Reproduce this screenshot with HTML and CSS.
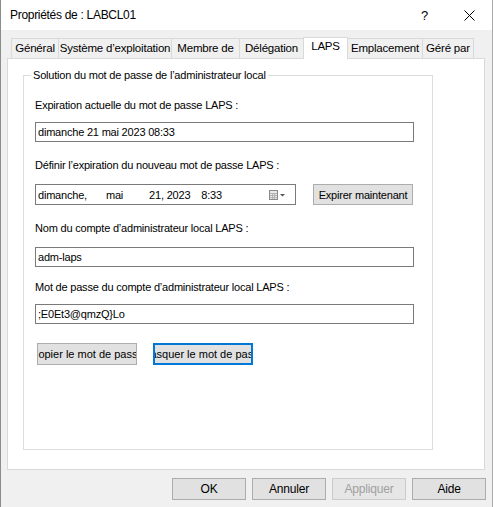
FILE: index.html
```html
<!DOCTYPE html>
<html lang="fr">
<head>
    <meta charset="UTF-8">
    <title>Propriétés de : LABCL01</title>
    <link rel="stylesheet" href="styles.css">
</head>
<body>
    <div class="window">
        <div class="titlebar">
            <span class="title">Propriétés de : LABCL01</span>
            <span class="help">?</span>
            <svg class="close" width="11" height="11" viewBox="0 0 11 11">
                <path d="M0.5 0.5 L10.5 10.5 M10.5 0.5 L0.5 10.5" stroke="#000" stroke-width="1" fill="none"/>
            </svg>
        </div>

        <!-- Onglets -->
        <div class="tabs">
            <div class="tab tab-general">Général</div>
            <div class="tab tab-system">Système d’exploitation</div>
            <div class="tab tab-member">Membre de</div>
            <div class="tab tab-delegation">Délégation</div>
            <div class="tab tab-laps active">LAPS</div>
            <div class="tab tab-location">Emplacement</div>
            <div class="tab tab-managed">Géré par</div>
        </div>

        <div class="panel">
            <fieldset class="group">
                <legend>Solution du mot de passe de l’administrateur local</legend>

                <div class="label label-first">Expiration actuelle du mot de passe LAPS :</div>
                <div class="textbox">dimanche 21 mai 2023 08:33</div>

                <div class="label label-date">Définir l’expiration du nouveau mot de passe LAPS :</div>
                <div class="date-row">
                    <div class="datepicker">
                        <span class="dp-day">dimanche,</span>
                        <span class="dp-month">mai</span>
                        <span class="dp-year">21, 2023</span>
                        <span class="dp-time">8:33</span>
                        <svg class="dp-icon" width="16" height="10" viewBox="0 0 16 10">
                            <rect x="0.5" y="0.5" width="8" height="9" fill="#e8e8e8" stroke="#8a8a8a"/>
                            <path d="M1 3.5 H8 M1 5.5 H8 M1 7.5 H8 M3.5 3 V9 M5.5 3 V9" stroke="#b4b4b4" stroke-width="1"/>
                            <path d="M11 4 H16 L13.5 6.5 Z" fill="#555"/>
                        </svg>
                    </div>
                    <button class="btn btn-expire">Expirer maintenant</button>
                </div>

                <div class="label label-account">Nom du compte d’administrateur local LAPS :</div>
                <div class="textbox">adm-laps</div>

                <div class="label">Mot de passe du compte d’administrateur local LAPS :</div>
                <div class="textbox">;E0Et3@qmzQ}Lo</div>

                <div class="pwd-actions">
                    <button class="btn btn-clip"><span>Copier le mot de passe</span></button>
                    <button class="btn btn-clip btn-focus"><span>Masquer le mot de passe</span></button>
                </div>
            </fieldset>
        </div>

        <div class="footer">
            <button class="btn btn-dialog">OK</button>
            <button class="btn btn-dialog">Annuler</button>
            <button class="btn btn-dialog" disabled>Appliquer</button>
            <button class="btn btn-dialog">Aide</button>
        </div>
    </div>
</body>
</html>
```

FILE: styles.css
```css
* {
    margin: 0;
    padding: 0;
    box-sizing: border-box;
}
body {
    font-family: 'Liberation Sans', Arial, sans-serif;
    font-size: 11px;
    letter-spacing: -0.2px;
    color: #000;
    background: #fff;
}
.window {
    width: 493px;
    height: 507px;
    background: #f0f0f0;
    border-left: 1px solid #8c8c8c;
    border-right: 1px solid #aaaaaa;
}

/* Barre de titre */
.titlebar {
    height: 30px;
    background: #fff;
    display: flex;
    align-items: center;
    padding-left: 9px;
    font-size: 12px;
    letter-spacing: -0.3px;
}
.title {
    flex: 1;
}
.help {
    font-size: 13px;
    margin-right: 36px;
}
.close {
    margin-right: 17px;
}

/* Onglets */
.tabs {
    display: flex;
    align-items: flex-end;
    height: 28px;
    padding-left: 10px;
    position: relative;
    z-index: 1;
}
.tab {
    height: 20px;
    line-height: 18px;
    text-align: center;
    border: 1px solid #d9d9d9;
    border-bottom: none;
    margin-right: -1px;
    font-size: 11.5px;
    letter-spacing: -0.2px;
    background: #f0f0f0;
    white-space: nowrap;
}
.tab.active {
    height: 22px;
    line-height: 16px;
    margin-bottom: -1px;
    background: #fff;
}
.tab-general { width: 48px; }
.tab-system { width: 114px; }
.tab-member { width: 69px; }
.tab-delegation { width: 65px; }
.tab-laps { width: 45px; }
.tab-location { width: 76px; }
.tab-managed { width: 52px; }

.panel {
    margin-left: 6px;
    width: 478px;
    height: 412px;
    background: #fff;
    border: 1px solid #d9d9d9;
}

/* Groupe */
.group {
    margin: 9px 0 0 15px;
    width: 410px;
    height: 382px;
    border: 1px solid #dcdcdc;
    padding: 0 18px 0 11px;
}
.group legend {
    margin-left: -4px;
    padding: 0 2px;
    line-height: 14px;
    font-size: 11px;
}
.label {
    line-height: 14px;
    margin-top: 13px;
    margin-bottom: 10px;
}
.label-first {
    margin-top: 16px;
    margin-bottom: 10px;
}
.label-date {
    margin-top: 16px;
    margin-bottom: 12px;
}
.label-account {
    margin-top: 16px;
    margin-bottom: 12px;
}
.textbox {
    height: 20px;
    line-height: 18px;
    border: 1px solid #7a7a7a;
    padding-left: 2px;
    background: #fff;
}

/* Sélecteur de date */
.date-row {
    display: flex;
    align-items: center;
}
.datepicker {
    width: 261px;
    height: 21px;
    border: 1px solid #7a7a7a;
    display: flex;
    align-items: center;
    padding-left: 2px;
}
.dp-month {
    margin-left: 19px;
}
.dp-year {
    margin-left: 26px;
}
.dp-time {
    margin-left: 11px;
}
.dp-icon {
    margin-left: auto;
    margin-right: 10px;
}

.btn {
    font-family: inherit;
    font-size: 11px;
    letter-spacing: -0.2px;
    color: #000;
    background: #e1e1e1;
    border: 1px solid #adadad;
    height: 22px;
}
.btn:disabled {
    color: #a0a0a0;
    background: #e6e6e6;
    border-color: #cccccc;
}
.btn-expire {
    margin-left: 17px;
    width: 100px;
    height: 21px;
}

.pwd-actions {
    display: flex;
    gap: 16px;
    margin-top: 19px;
    padding-left: 2px;
}
.btn-clip {
    width: 100px;
    overflow: hidden;
    display: flex;
    justify-content: center;
    align-items: center;
    white-space: nowrap;
    letter-spacing: 0;
}
.btn-focus {
    border: 2px solid #0078d7;
}

.footer {
    display: flex;
    justify-content: flex-end;
    gap: 6px;
    padding: 8px 6px 0 0;
}
.btn-dialog {
    width: 74px;
    font-size: 12px;
}
```
